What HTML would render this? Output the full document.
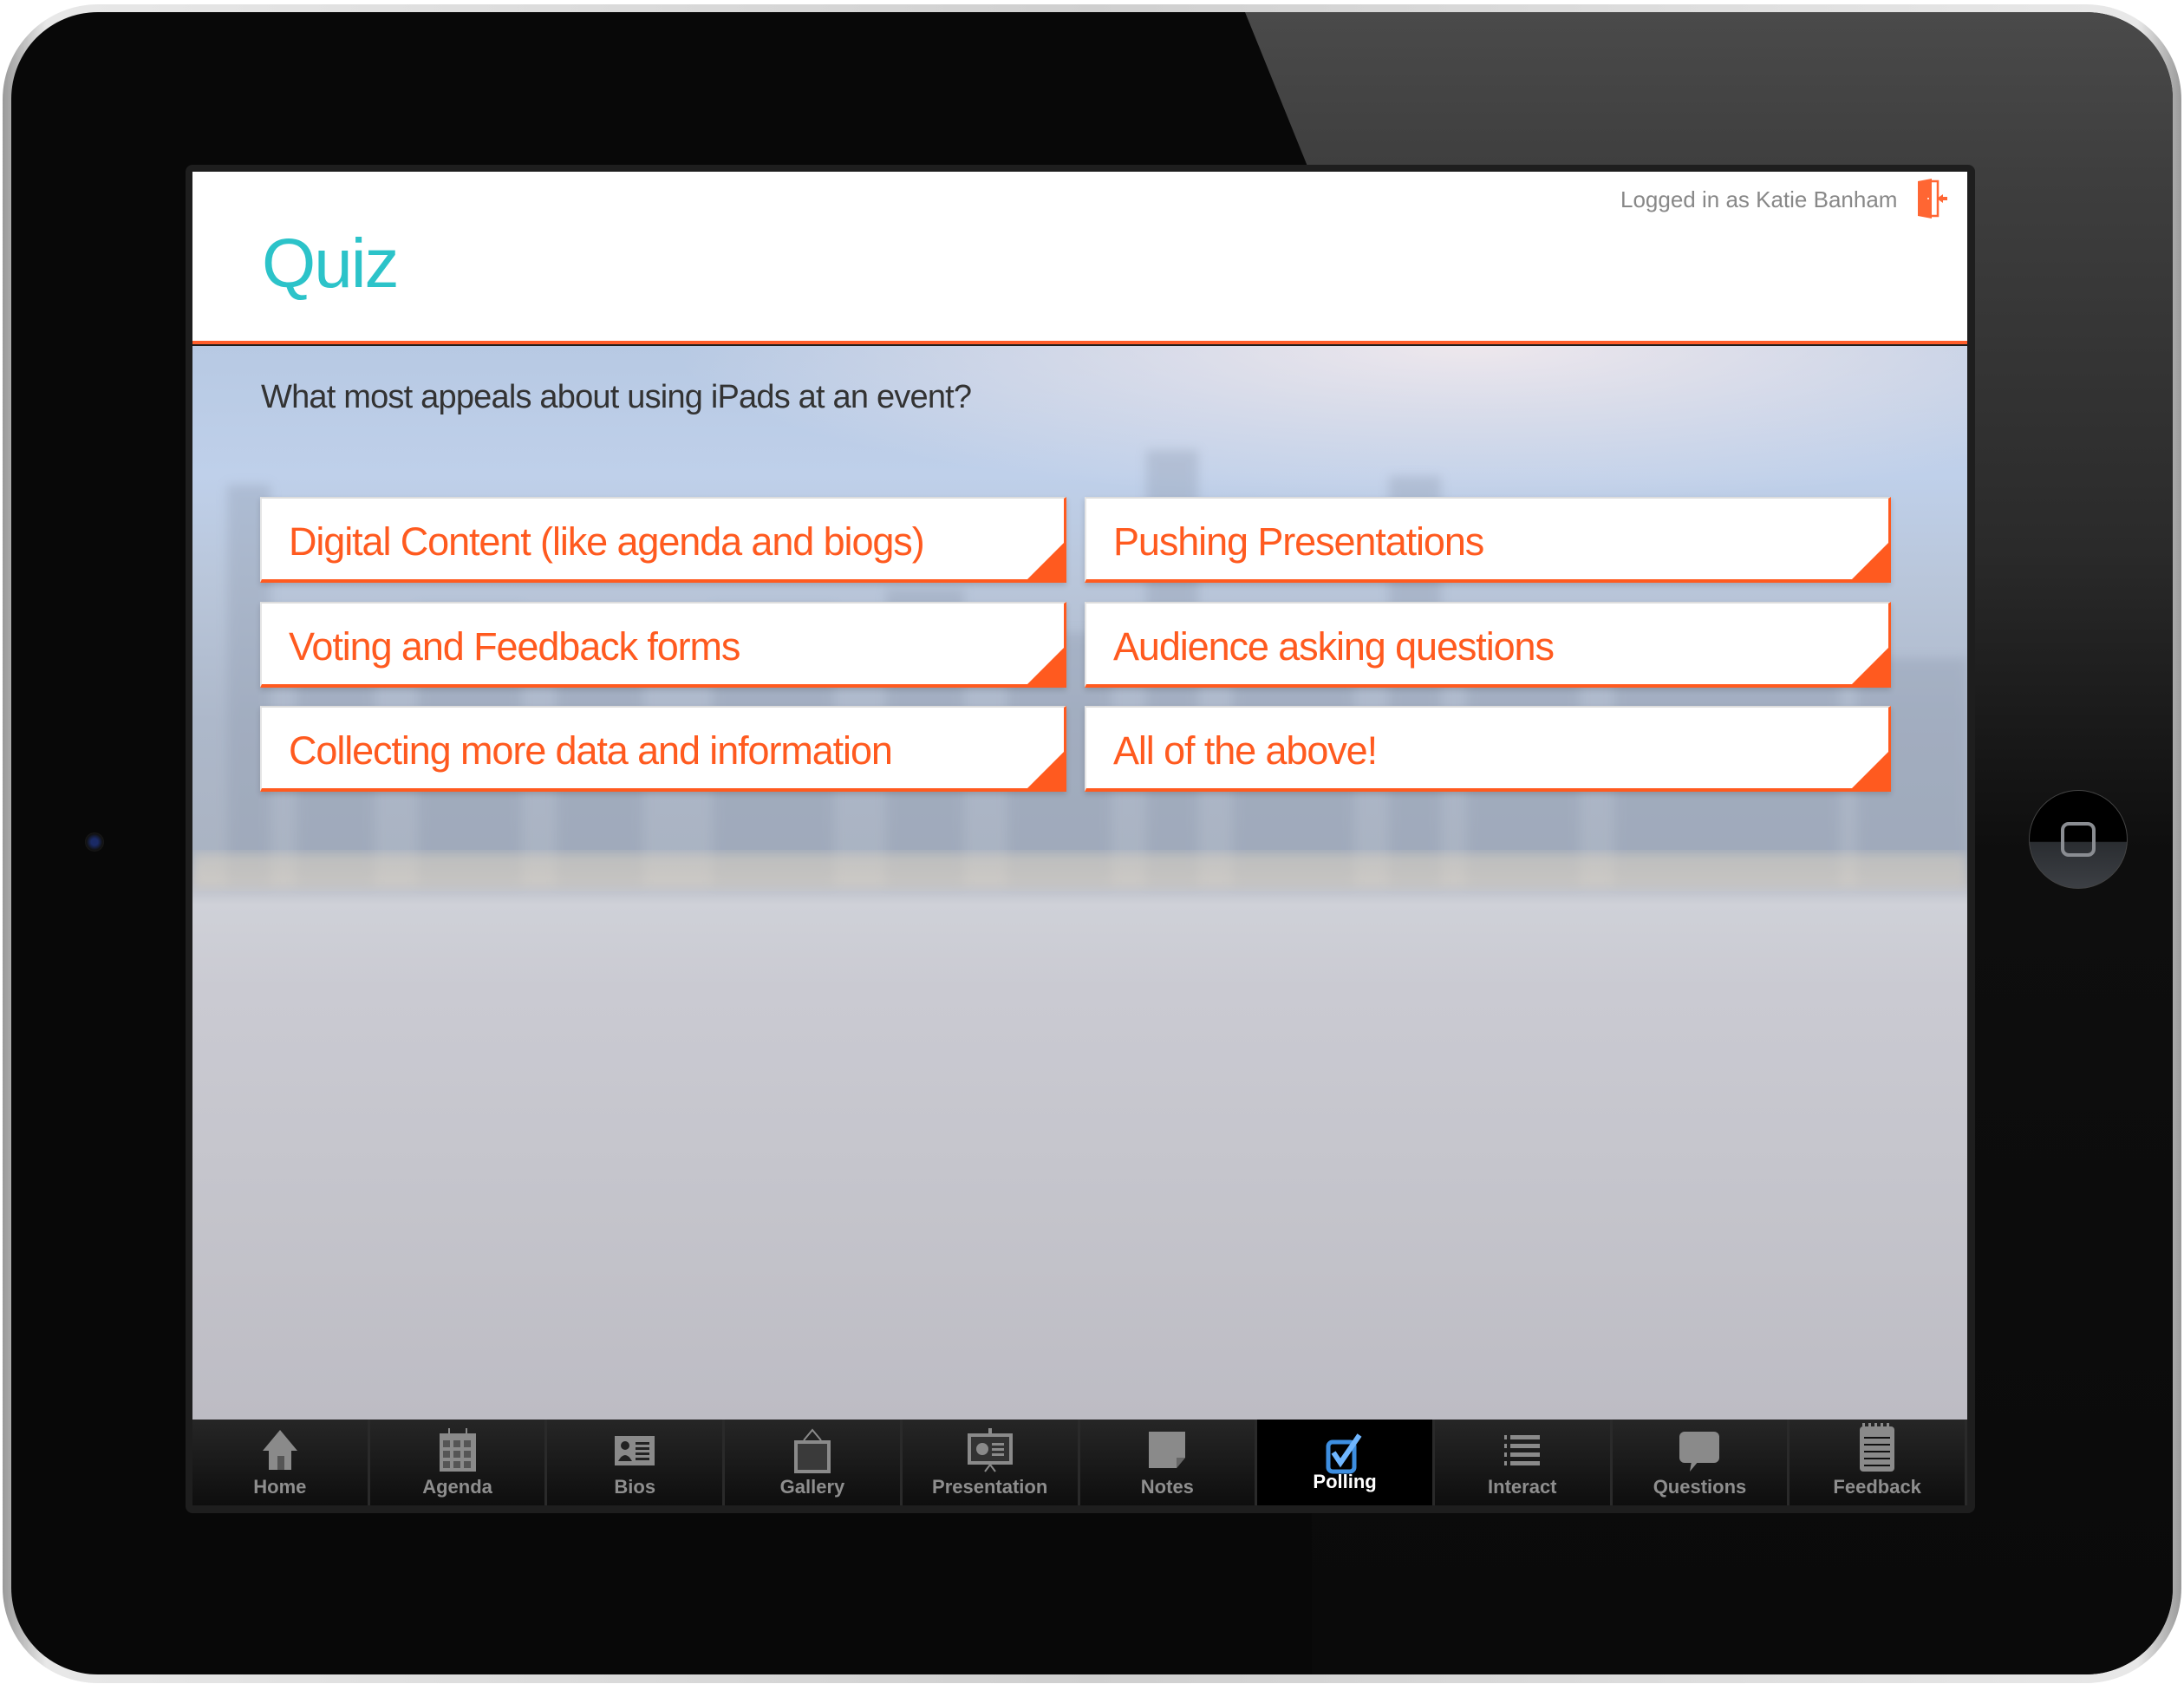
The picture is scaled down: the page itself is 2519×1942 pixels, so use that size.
<!DOCTYPE html>
<html><head><meta charset="utf-8"><style>
*{margin:0;padding:0;box-sizing:border-box}
body{width:2519px;height:1942px;background:#fff;position:relative;overflow:hidden;font-family:"Liberation Sans",sans-serif}
.abs{position:absolute}
#ipad{left:3px;top:5px;width:2513px;height:1936px;border-radius:110px;background:linear-gradient(90deg,#9a9a9a,#e8e8e8 2%,#cfcfcf 50%,#e8e8e8 98%,#9a9a9a);}
#bezel{left:13px;top:14px;width:2493px;height:1917px;border-radius:100px;background:#080808;overflow:hidden}
#glare{left:0;top:0;width:2493px;height:1917px}
#screenframe{left:214px;top:190px;width:2064px;height:1555px;background:#1e1e1e;border-radius:8px}
#hdr{left:222px;top:198px;width:2047px;height:199px;background:#fff;border-bottom:4px solid #ff5e2b}
#content{left:222px;top:399px;width:2047px;height:1238px;overflow:hidden;
background:linear-gradient(180deg,#b7c9e3 0%,#bfd0ea 12%,#b9c6da 22%,#adb8ca 35%,#aab3c2 48%,#b8bcc6 50%,#cfd1d8 52%,#cacad2 60%,#c4c4cb 80%,#bdbcc4 100%)}
.btn{position:absolute;width:930px;height:99px;background:#fff;border-top:2px solid #ddd;border-left:2px solid #e6e6e6;border-right:3px solid #ff5a1f;border-bottom:4px solid #ff5a1f;box-shadow:0 3px 6px rgba(0,0,0,.15)}
.btn span{position:absolute;left:31px;top:24px;font-size:45px;color:#ff5a1f;letter-spacing:-1.1px;white-space:nowrap}
.btn i{position:absolute;right:0;bottom:0;width:0;height:0;border-left:42px solid transparent;border-bottom:42px solid #ff5a1f}
#tabs{left:222px;top:1637px;width:2047px;height:99px;background:#151515;display:flex}
.tab{flex:1;border-right:3px solid #2a2a2a;background:linear-gradient(180deg,#262626,#0e0e0e);position:relative;text-align:center}
.tab.on{background:#000}
.tab b{position:absolute;left:0;right:0;bottom:8px;font-size:22px;color:#8e8e8e;font-weight:bold}
.tab.on b{color:#fff;bottom:14px}
.tab svg{position:absolute;left:50%;top:10px;transform:translateX(-50%)}
</style></head><body>
<div id="ipad" class="abs"></div>
<div id="bezel" class="abs">
<svg id="glare" class="abs" width="2493" height="1917">
<defs><linearGradient id="g" x1="0" y1="0" x2="0" y2="1"><stop offset="0" stop-color="#4a4a4a"/><stop offset="1" stop-color="#3e3e3e"/></linearGradient>
<linearGradient id="g2" x1="0" y1="0" x2="0" y2="1"><stop offset="0" stop-color="#3e3e3e"/><stop offset=".25" stop-color="#2a2a2a"/><stop offset=".45" stop-color="#0e0e0e"/><stop offset="1" stop-color="#0a0a0a"/></linearGradient></defs>
<rect x="1500" y="189" width="993" height="1728" fill="url(#g2)"/>
<polygon points="1423,0 2493,0 2493,190 1500,190" fill="url(#g)"/>
</svg>
<div class="abs" style="left:2327px;top:897px;width:114px;height:114px;border-radius:50%;background:linear-gradient(180deg,#000 52%,#2a2d31 53%,#3c3f44);border:1px solid #444"></div>
<div class="abs" style="left:2364px;top:934px;width:40px;height:40px;border:4px solid #8a8d92;border-radius:9px"></div>
<div class="abs" style="left:85px;top:946px;width:22px;height:22px;border-radius:50%;background:radial-gradient(circle,#1a2a66 25%,#111 60%,#333)"></div>
</div>
<div id="screenframe" class="abs"></div>
<div id="hdr" class="abs">
<div class="abs" style="left:80px;top:60px;font-size:80px;color:#2cc3c9;letter-spacing:-2px">Quiz</div>
<div class="abs" style="left:1647px;top:17px;font-size:26px;color:#888">Logged in as Katie Banham</div>
<svg class="abs" style="left:1988px;top:8px" width="40" height="46" viewBox="0 0 40 46">
<path d="M2 3 L18 0 L18 46 L2 43 Z" fill="#ff6633"/>
<path d="M18 3 H25 V43 H18" fill="none" stroke="#ff6633" stroke-width="2.5"/>
<path d="M24 23 L31 18 V21 H36 V25 H31 V28 Z" fill="#ff6633"/>
<circle cx="14" cy="23" r="1" fill="#fff"/>
</svg>
</div>
<div id="content" class="abs">
<svg class="abs" style="left:0;top:0" width="2047" height="1238">
<defs><radialGradient id="sun" cx=".72" cy="0" r=".45"><stop offset="0" stop-color="#f4ebee" stop-opacity=".9"/><stop offset="1" stop-color="#f4ebee" stop-opacity="0"/></radialGradient>
<filter id="bl"><feGaussianBlur stdDeviation="6"/></filter></defs>
<rect width="2047" height="400" fill="url(#sun)"/>
<g fill="#8e9aae" opacity=".35" filter="url(#bl)">
<rect x="40" y="160" width="50" height="460"/><rect x="120" y="310" width="90" height="310"/><rect x="260" y="300" width="120" height="320"/><rect x="420" y="330" width="100" height="290"/><rect x="600" y="300" width="140" height="320"/><rect x="800" y="280" width="90" height="340"/><rect x="940" y="330" width="120" height="290"/><rect x="1100" y="120" width="60" height="500"/><rect x="1200" y="330" width="140" height="290"/><rect x="1380" y="150" width="60" height="470"/><rect x="1470" y="320" width="130" height="300"/><rect x="1640" y="330" width="260" height="290"/><rect x="1920" y="360" width="127" height="260"/>
</g>
<rect x="0" y="585" width="2047" height="40" fill="#e0d6c4" opacity=".5" filter="url(#bl)"/>
</svg>
<div class="abs" style="left:79px;top:38px;font-size:38px;color:#333;letter-spacing:-.8px">What most appeals about using iPads at an event?</div>
<div class="btn" style="left:78px;top:174px"><span>Digital Content (like agenda and biogs)</span><i></i></div>
<div class="btn" style="left:1029px;top:174px"><span>Pushing Presentations</span><i></i></div>
<div class="btn" style="left:78px;top:295px"><span>Voting and Feedback forms</span><i></i></div>
<div class="btn" style="left:1029px;top:295px"><span>Audience asking questions</span><i></i></div>
<div class="btn" style="left:78px;top:415px"><span>Collecting more data and information</span><i></i></div>
<div class="btn" style="left:1029px;top:415px"><span>All of the above!</span><i></i></div>
</div>
<div id="tabs" class="abs">
<div class="tab"><svg width="46" height="50"><path d="M23 2 L3 26 H10 V48 H36 V26 H43 Z" fill="#8a8a8a"/><rect x="20" y="32" width="8" height="16" fill="#555"/></svg><b>Home</b></div>
<div class="tab"><svg width="50" height="50"><rect x="4" y="6" width="42" height="44" fill="#8a8a8a"/><g fill="#555"><rect x="8" y="14" width="8" height="8"/><rect x="20" y="14" width="8" height="8"/><rect x="32" y="14" width="8" height="8"/><rect x="8" y="26" width="8" height="8"/><rect x="20" y="26" width="8" height="8"/><rect x="32" y="26" width="8" height="8"/><rect x="8" y="38" width="8" height="8"/><rect x="20" y="38" width="8" height="8"/><rect x="32" y="38" width="8" height="8"/></g><rect x="14" y="0" width="2" height="8" fill="#8a8a8a"/><rect x="34" y="0" width="2" height="8" fill="#8a8a8a"/></svg><b>Agenda</b></div>
<div class="tab"><svg width="50" height="50"><rect x="2" y="9" width="46" height="34" fill="#8a8a8a"/><circle cx="14" cy="20" r="5" fill="#222"/><path d="M6 38 Q14 24 22 38Z" fill="#222"/><g fill="#222"><rect x="26" y="16" width="16" height="3"/><rect x="26" y="22" width="16" height="3"/><rect x="26" y="28" width="16" height="3"/><rect x="26" y="34" width="16" height="3"/></g></svg><b>Bios</b></div>
<div class="tab"><svg width="50" height="52"><path d="M15 14 L25 2 L35 14" fill="none" stroke="#8a8a8a" stroke-width="2"/><rect x="4" y="14" width="42" height="38" fill="#8a8a8a"/><rect x="8" y="18" width="34" height="30" fill="#3a3a3a"/></svg><b>Gallery</b></div>
<div class="tab"><svg width="56" height="52"><rect x="26" y="0" width="4" height="6" fill="#8a8a8a"/><rect x="2" y="6" width="52" height="36" fill="#8a8a8a"/><rect x="6" y="10" width="44" height="28" fill="#333"/><circle cx="19" cy="24" r="7" fill="#8a8a8a"/><g fill="#8a8a8a"><rect x="30" y="17" width="14" height="3"/><rect x="30" y="23" width="14" height="3"/><rect x="30" y="29" width="14" height="3"/></g><path d="M22 50 L28 42 L34 50" stroke="#8a8a8a" stroke-width="2" fill="none"/></svg><b>Presentation</b></div>
<div class="tab"><svg width="46" height="50"><path d="M2 4 H44 V34 L34 46 H2 Z" fill="#8a8a8a"/><path d="M34 46 L34 34 H44Z" fill="#666"/></svg><b>Notes</b></div>
<div class="tab on"><svg width="46" height="50" style="top:14px"><rect x="4" y="12" width="30" height="34" rx="5" fill="none" stroke="#3d8ee0" stroke-width="5"/><path d="M10 24 L18 36 L40 4" fill="none" stroke="#6fb6ff" stroke-width="6"/></svg><b>Polling</b></div>
<div class="tab"><svg width="46" height="46" style="top:16px"><g fill="#8a8a8a"><rect x="2" y="2" width="3" height="5"/><rect x="9" y="2" width="34" height="5"/><rect x="2" y="12" width="3" height="5"/><rect x="9" y="12" width="34" height="5"/><rect x="2" y="22" width="3" height="5"/><rect x="9" y="22" width="34" height="5"/><rect x="2" y="32" width="3" height="5"/><rect x="9" y="32" width="34" height="5"/></g></svg><b>Interact</b></div>
<div class="tab"><svg width="50" height="50"><rect x="2" y="4" width="46" height="36" rx="6" fill="#8a8a8a"/><path d="M16 38 L14 50 L24 38Z" fill="#8a8a8a"/></svg><b>Questions</b></div>
<div class="tab"><svg width="46" height="56" style="top:4px"><rect x="3" y="4" width="40" height="52" rx="4" fill="#8a8a8a"/><g fill="#111"><rect x="8" y="16" width="30" height="2"/><rect x="8" y="24" width="30" height="2"/><rect x="8" y="32" width="30" height="2"/><rect x="8" y="40" width="30" height="2"/><rect x="8" y="48" width="30" height="2"/></g><g fill="#8a8a8a"><rect x="6" y="0" width="3" height="4"/><rect x="13" y="0" width="3" height="4"/><rect x="20" y="0" width="3" height="4"/><rect x="27" y="0" width="3" height="4"/><rect x="34" y="0" width="3" height="4"/></g></svg><b>Feedback</b></div>
</div>
</body></html>
